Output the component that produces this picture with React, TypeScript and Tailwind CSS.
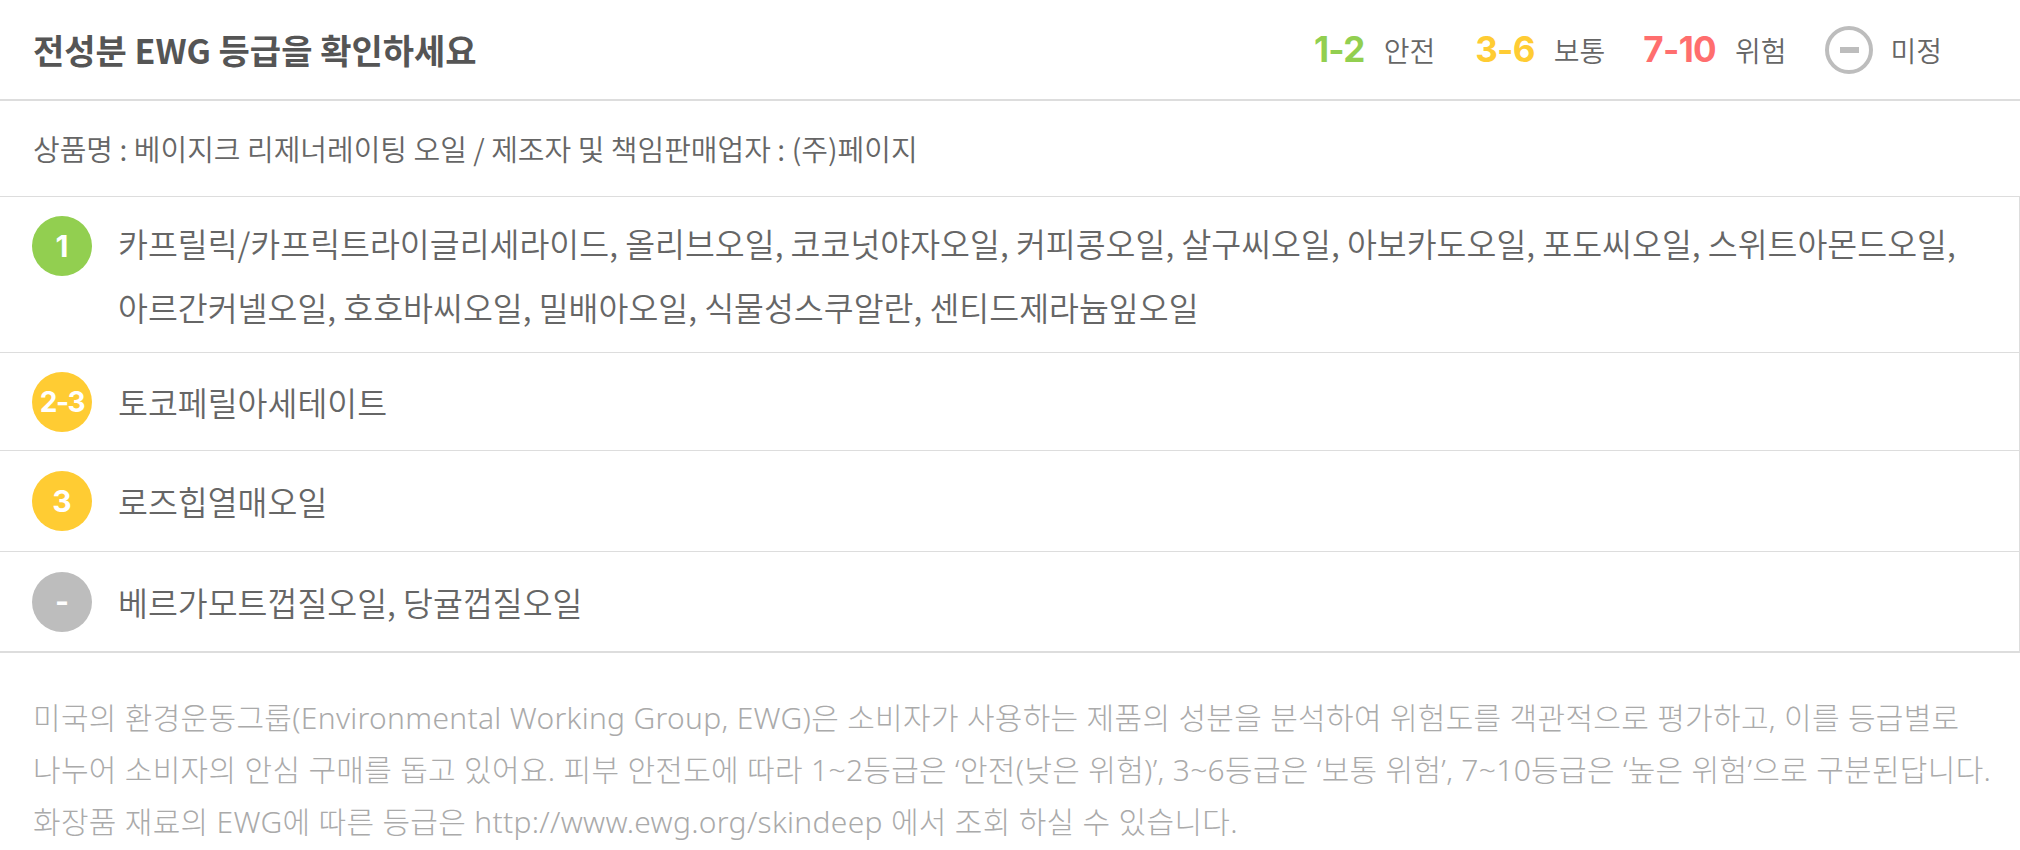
import React from "react";

const KR = "font-['Noto_Sans_CJK_KR','Noto_Sans',sans-serif]";

function Badge({ label, color, small }: { label: string; color: string; small?: boolean }) {
  return (
    <div
      className={`flex h-[60px] w-[60px] shrink-0 items-center justify-center rounded-full font-['Inter',sans-serif] font-bold text-white ${color} ${
        small ? "text-[28px] tracking-[-0.05em]" : "text-[30px]"
      }`}
    >
      {label}
    </div>
  );
}

export default function App() {
  return (
    <div className={`w-[2020px] bg-white ${KR}`}>
      {/* Header */}
      <div className="flex h-[101px] items-center justify-between border-b-2 border-[#dddddd] pl-[33px] pr-[78px]">
        <h1 className="text-[34px] font-bold text-[#555555]">전성분 EWG 등급을 확인하세요</h1>
        <div className="flex items-center">
          <span className="font-['Inter',sans-serif] text-[35px] font-bold tracking-[-0.02em] text-[#92cf50]">1-2</span>
          <span className="ml-[19px] text-[28px] font-[350] text-[#666666]">안전</span>
          <span className="ml-[40px] font-['Inter',sans-serif] text-[35px] font-bold tracking-[-0.02em] text-[#ffcc33]">3-6</span>
          <span className="ml-[19px] text-[28px] font-[350] text-[#666666]">보통</span>
          <span className="ml-[38px] font-['Inter',sans-serif] text-[35px] font-bold tracking-[-0.02em] text-[#ff6e6e]">7-10</span>
          <span className="ml-[19px] text-[28px] font-[350] text-[#666666]">위험</span>
          <span className="ml-[39px] flex h-[48px] w-[48px] items-center justify-center rounded-full border-4 border-[#bdbdbd]">
            <span className="h-[6px] w-[19px] bg-[#bdbdbd]" />
          </span>
          <span className="ml-[17px] text-[28px] font-[350] text-[#666666]">미정</span>
        </div>
      </div>

      {/* Product */}
      <div className="flex h-[96px] items-center border-b border-[#dddddd] pl-[33px] text-[29px] font-[350] text-[#666666]">
        상품명 : 베이지크 리제너레이팅 오일 / 제조자 및 책임판매업자 : (주)페이지
      </div>

      {/* Rows */}
      <div className="border-r border-[#dddddd]">
        <div className="flex items-start border-b border-[#dddddd] pb-[13px] pl-[32px] pr-[40px] pt-[14px]">
          <div className="mt-[5px]">
            <Badge label="1" color="bg-[#92cf50]" />
          </div>
          <p className="ml-[26px] break-keep text-[32.5px] font-[350] leading-[64px] text-[#666666]">
            카프릴릭/카프릭트라이글리세라이드, 올리브오일, 코코넛야자오일, 커피콩오일, 살구씨오일, 아보카도오일, 포도씨오일, 스위트아몬드오일, 아르간커넬오일, 호호바씨오일, 밀배아오일, 식물성스쿠알란, 센티드제라늄잎오일
          </p>
        </div>
        <div className="flex h-[98px] items-center border-b border-[#dddddd] pl-[32px]">
          <Badge label="2-3" color="bg-[#ffcc33]" small />
          <p className="ml-[26px] text-[32.5px] font-[350] leading-[64px] text-[#666666]">토코페릴아세테이트</p>
        </div>
        <div className="flex h-[101px] items-center border-b border-[#dddddd] pl-[32px]">
          <Badge label="3" color="bg-[#ffcc33]" />
          <p className="ml-[26px] text-[32.5px] font-[350] leading-[64px] text-[#666666]">로즈힙열매오일</p>
        </div>
        <div className="flex h-[101px] items-center border-b-2 border-[#dddddd] pl-[32px]">
          <Badge label="-" color="bg-[#bdbdbd]" />
          <p className="ml-[26px] text-[32.5px] font-[350] leading-[64px] text-[#666666]">베르가모트껍질오일, 당귤껍질오일</p>
        </div>
      </div>

      {/* Footer */}
      <div className="pl-[33px] pr-[8px] pt-[39px]">
        <p className="break-keep font-['Noto_Sans','Noto_Sans_CJK_KR',sans-serif] text-[30px] font-light leading-[52px] tracking-[0.01em] text-[#aaaaaa]">
          미국의 환경운동그룹(Environmental Working Group, EWG)은 소비자가 사용하는 제품의 성분을 분석하여 위험도를 객관적으로 평가하고, 이를 등급별로 나누어 소비자의 안심 구매를 돕고 있어요. 피부 안전도에 따라 1~2등급은 ‘안전(낮은 위험)’, 3~6등급은 ‘보통 위험’, 7~10등급은 ‘높은 위험’으로 구분된답니다. 화장품 재료의 EWG에 따른 등급은 http://www.ewg.org/skindeep 에서 조회 하실 수 있습니다.
        </p>
      </div>
    </div>
  );
}
